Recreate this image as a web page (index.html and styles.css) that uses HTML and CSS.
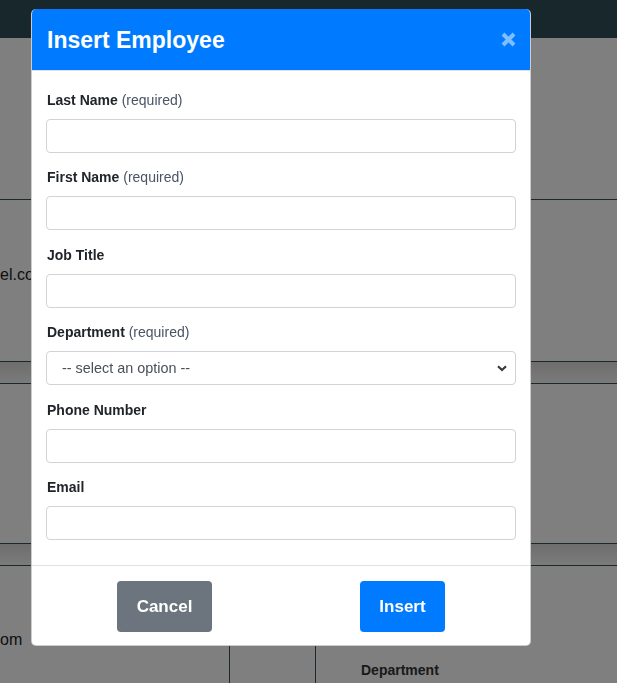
FILE: index.html
```html
<!DOCTYPE html>
<html lang="en">
<head>
<meta charset="utf-8">
<title>Insert Employee</title>
<link rel="stylesheet" href="styles.css">
</head>
<body>
<div class="page">
  <div class="nav"></div>
  <div class="sec sec-a"></div>
  <div class="sec sec-b"><span class="bg-text">el.com</span></div>
  <div class="band"></div>
  <div class="sec sec-c"></div>
  <div class="band"></div>
  <div class="sec-d">
    <div class="col col1"><span class="bg-text">om</span></div>
    <div class="col col2"></div>
    <div class="col col3"><span class="bg-head">Department</span></div>
  </div>
</div>

<div class="overlay"></div>

<div class="modal">
  <div class="modal-header">
    <h2 class="modal-title">Insert Employee</h2>
    <button class="close" type="button" aria-label="Close">
      <svg width="15" height="15" viewBox="0 0 15 15"><path d="M2 2 L13 13 M13 2 L2 13" stroke="currentColor" stroke-width="4" fill="none"/></svg>
    </button>
  </div>
  <form class="modal-body">
    <div class="group">
      <label class="lbl"><b>Last Name</b> <span class="req">(required)</span></label>
      <input class="field" type="text">
    </div>
    <div class="group">
      <label class="lbl"><b>First Name</b> <span class="req">(required)</span></label>
      <input class="field" type="text">
    </div>
    <div class="group">
      <label class="lbl"><b>Job Title</b></label>
      <input class="field" type="text">
    </div>
    <div class="group">
      <label class="lbl"><b>Department</b> <span class="req">(required)</span></label>
      <div class="select-wrap">
        <select class="field select"><option>-- select an option --</option></select>
        <svg class="chev" width="10" height="7" viewBox="0 0 10 7"><path d="M1 1.2 L5 5 L9 1.2" stroke="#343a40" stroke-width="2.2" fill="none"/></svg>
      </div>
    </div>
    <div class="group">
      <label class="lbl"><b>Phone Number</b></label>
      <input class="field" type="text">
    </div>
    <div class="group">
      <label class="lbl"><b>Email</b></label>
      <input class="field" type="text">
    </div>
  </form>
  <div class="modal-footer">
    <button class="btn btn-cancel" type="button">Cancel</button>
    <button class="btn btn-insert" type="button">Insert</button>
  </div>
</div>
</body>
</html>
```

FILE: styles.css
```css
* { box-sizing: border-box; }
html, body { margin: 0; padding: 0; }
body {
  font-family: "Liberation Sans", Arial, sans-serif;
  background: #fff;
  width: 617px;
  height: 683px;
  overflow: hidden;
  color: #212529;
}
.page { display: flex; flex-direction: column; }
.nav { height: 38px; background: #2f4f59; }
.sec { border-bottom: 1px solid #36525e; }
.sec-a { height: 162px; }
.sec-b { height: 162px; padding-top: 66px; }
.sec-c { height: 160px; }
.band {
  height: 22px;
  border-bottom: 1px solid #36525e;
  background: linear-gradient(#dcdcdc, #f6f6f6);
}
.bg-text { font-size: 16px; color: #222; }
.sec-d { display: grid; grid-template-columns: 230px 86px 1fr; height: 117px; }
.col { border-right: 1px solid #36525e; }
.col3 { border-right: 0; padding: 95px 0 0 45px; }
.col1 { padding-top: 65px; }
.bg-head { font-weight: bold; font-size: 14px; color: #333; }

.overlay {
  position: fixed;
  inset: 0;
  background: rgba(0, 0, 0, .5);
}

.modal {
  position: absolute;
  top: 9px;
  left: 31px;
  width: 500px;
  background: #fff;
  border: 1px solid rgba(0, 0, 0, .2);
  border-top: 0;
  border-radius: 5px;
  overflow: hidden;
}
.modal-header {
  background: #007bff;
  border-bottom: 1px solid #dee2e6;
  display: flex;
  align-items: center;
  justify-content: space-between;
  padding: 17px 14px 16px 15px;
  height: 62px;
}
.modal-title {
  margin: 0;
  color: #fff;
  font-size: 23px;
  font-weight: bold;
  line-height: 28px;
}
.close {
  border: 0;
  background: none;
  padding: 0;
  margin-top: -2px;
  color: rgba(255, 255, 255, .5);
  display: flex;
}
.modal-body {
  margin: 0;
  padding: 18.5px 14px 10.5px 14px;
}
.group { margin-bottom: 14.5px; display: flex; flex-direction: column; }
.lbl {
  display: block;
  font-size: 14px;
  line-height: 21px;
  margin: 0 0 8px 1px;
}
.lbl b { color: #212529; }
.req { color: #495464; }
.field {
  display: block;
  width: 100%;
  height: 34px;
  border: 1px solid #ced4da;
  border-radius: 4px;
  background: #fff;
  font-family: inherit;
  font-size: 14.4px;
  color: #495057;
  padding: 0 12px;
  margin: 0;
}
.select-wrap { position: relative; }
.select {
  -webkit-appearance: none;
  appearance: none;
  padding-left: 15px;
  outline: none;
}
.chev {
  position: absolute;
  right: 9px;
  top: 14px;
  pointer-events: none;
}
.modal-footer {
  border-top: 1px solid #dee2e6;
  display: flex;
  padding: 15px 0 13px 85px;
  gap: 148px;
}
.btn {
  border: 0;
  border-radius: 4px;
  color: #fff;
  font-family: inherit;
  font-weight: bold;
  font-size: 17px;
  line-height: 21px;
  height: 51px;
  padding: 0;
}
.btn-cancel { background: #6c757d; width: 95px; }
.btn-insert { background: #007bff; width: 85px; }
```
